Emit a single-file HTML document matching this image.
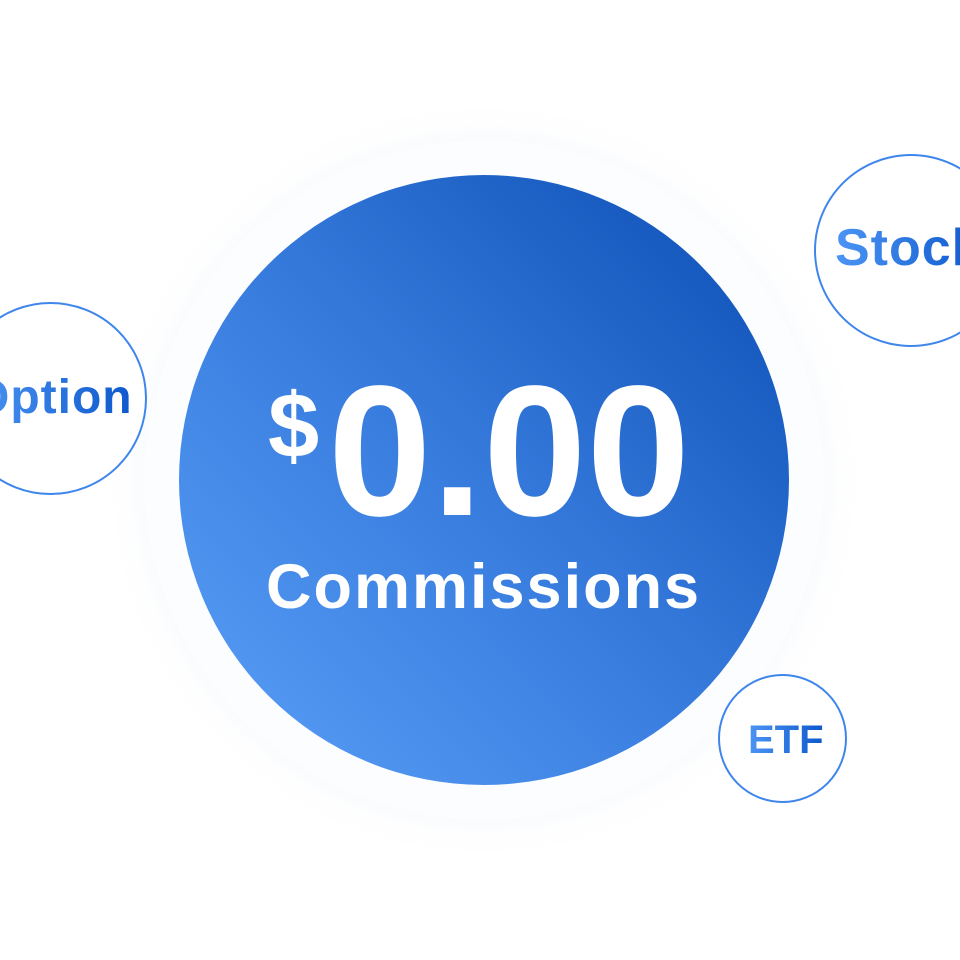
<!DOCTYPE html>
<html><head><style>
html,body{margin:0;width:960px;height:960px;background:#fff;overflow:hidden;position:relative;font-family:"Liberation Sans","DejaVu Sans",sans-serif}
.halo{position:absolute;left:144px;top:140px;width:680px;height:680px;border-radius:50%;background:#fcfdff;box-shadow:0 0 20px 6px rgba(240,245,252,.5)}
.main{position:absolute;left:179px;top:175px;width:610px;height:610px;border-radius:50%;background:linear-gradient(45deg,#5ba0f7 0%,#3a7fe0 45%,#0b4db4 100%)}
.t{position:absolute;color:#fff;font-weight:bold;white-space:nowrap}
.sm{position:absolute;border-radius:50%;border:2px solid #3f86ec;box-sizing:border-box;background:#fff}
.lb{position:absolute;font-weight:bold;white-space:nowrap;background:linear-gradient(90deg,#4c95f5,#0d58cc);-webkit-background-clip:text;background-clip:text;color:transparent}
</style></head><body>
<div class="halo"></div>
<div class="main"></div>
<div class="t" style="left:268px;top:380px;font-size:92px;line-height:92px">$</div>
<div class="t" style="left:328px;top:360px;font-size:186px;line-height:184px">0.00</div>
<div class="t" style="left:266px;top:552px;font-size:63px;line-height:70px;letter-spacing:2px">Commissions</div>
<div class="sm" style="left:-46px;top:302px;width:193px;height:193px"></div>
<div class="lb" style="left:-28px;top:370px;font-size:48px;line-height:56px;letter-spacing:1px">Option</div>
<div class="sm" style="left:814px;top:154px;width:194px;height:193px"></div>
<div class="lb" style="left:835px;top:218px;font-size:52px;line-height:60px;letter-spacing:1px">Stock</div>
<div class="sm" style="left:718px;top:674px;width:129px;height:129px"></div>
<div class="lb" style="left:748px;top:717px;font-size:40px;line-height:46px">ETF</div>
</body></html>
